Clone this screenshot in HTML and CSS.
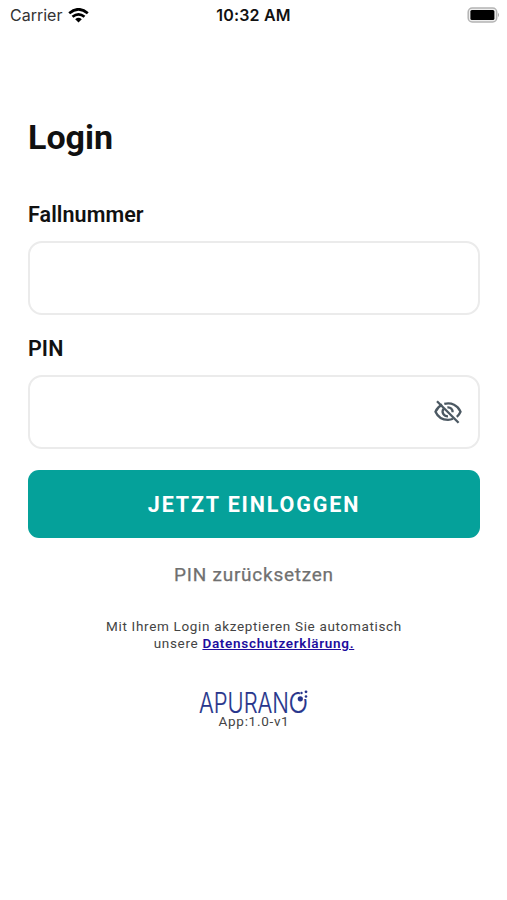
FILE: index.html
```html
<!DOCTYPE html>
<html lang="de">
<head>
<meta charset="utf-8">
<title>Login</title>
<link rel="stylesheet" href="styles.css">
</head>
<body>
<header class="status">
  <div class="carrier"><span>Carrier</span>
    <svg class="wifi" width="21" height="15" viewBox="0 0 21 15" fill="none" stroke="#000" stroke-width="2.7"><path d="M1.2 5.2Q10.5-2.6 19.8 5.2M4.5 8.8Q10.5 3.8 16.5 8.8"/><path d="M7.2 11.2Q10.5 8.4 13.8 11.2L10.5 14.6Z" fill="#000" stroke="none"/></svg>
  </div>
  <time class="clock">10:32 AM</time>
  <svg class="battery" width="34" height="16" viewBox="0 0 34 16"><rect x="1.2" y="1" width="28.5" height="14" rx="4" fill="#eee" stroke="#b4b4b4" stroke-width="1.5"/><rect x="3.4" y="3" width="24" height="10" rx="1.5" fill="#000"/><path d="M31 5.8Q33 8 31 10.2Z" fill="#aaa"/></svg>
</header>
<main class="login">
  <h1 class="title">Login</h1>
  <label class="label" for="case">Fallnummer</label>
  <div class="field"><input class="input" id="case" type="text"></div>
  <label class="label" for="pin">PIN</label>
  <div class="field"><input class="input" id="pin" type="password">
    <svg class="eye" width="28" height="24" viewBox="0 0 28 24" fill="none" stroke="#4c5963" stroke-width="2.3"><path d="M8.2 4.6C4.8 6.2 2.6 9 1.5 11.7C3.6 16.5 8.3 19.8 14 19.8C15.8 19.8 17.5 19.5 19 18.8M10.3 3.9C17.2 2 24 5.3 26.5 11.7C25.7 13.6 24.5 15.4 22.8 16.8"/><path d="M9.5 8.8C7.2 12.3 9.6 16.3 14 16.3M13.4 7.4C16.6 7.1 18.8 9.2 18.6 12.3"/><path d="M3 1.2L24.6 22.8"/></svg>
  </div>
  <button class="submit">JETZT EINLOGGEN</button>
  <a class="reset">PIN zurücksetzen</a>
  <p class="legal">Mit Ihrem Login akzeptieren Sie automatisch<br>unsere <a class="privacy" href="#">Datenschutzerklärung.</a></p>
  <svg class="logo" width="112" height="26" viewBox="0 0 112 26"><text class="wordmark" y="23.5"><tspan x="1" textLength="90" lengthAdjust="spacingAndGlyphs">APURAN</tspan><tspan x="90.5" textLength="19.5" lengthAdjust="spacingAndGlyphs">O</tspan></text><path d="M101 0H112V10H103Z" fill="#fff"/><circle cx="102.3" cy="9.8" r="2.6"/><circle cx="108" cy="7.5" r="1.3"/><circle cx="103.5" cy="4" r="1.2"/><circle cx="108" cy="2.8" r="1.4"/></svg>
  <p class="version">App:1.0-v1</p>
</main>
</body>
</html>
```
FILE: styles.css
```css
* { box-sizing: border-box; }
body { margin: 0; background: #fff; color: #111; font-family: Roboto, sans-serif; }
p, h1 { margin: 0; }
.status { display: grid; grid-template-columns: 1fr auto 1fr; align-items: center; height: 30px; padding: 0 6px 0 10px; font: 16px/30px Inter, sans-serif; }
.carrier { display: flex; align-items: center; gap: 6px; color: #333; }
.clock { font-weight: 600; letter-spacing: .2px; margin-right: 4px; }
.battery { justify-self: end; }
.login { display: flex; flex-direction: column; padding: 87px 27px 0 28px; }
.title { font-size: 34px; line-height: 40px; font-weight: 700; margin-bottom: 45px; }
.label { font-size: 21.5px; line-height: 26px; font-weight: 600; letter-spacing: .08px; margin-bottom: 13px; }
.field { display: flex; align-items: center; height: 74px; padding: 0 16px; border: 2px solid #ebebeb; border-radius: 14px; margin-bottom: 21px; }
.input { flex: 1; min-width: 0; height: 60px; border: 0; outline: 0; background: transparent; font: inherit; }
.submit { height: 68px; border: 0; border-radius: 11px; background: #05a19a; color: #fff; font: 700 21.5px/68px Roboto, sans-serif; letter-spacing: 1.85px; padding: 1px 0 0; }
.reset { align-self: center; margin-top: 24px; font-size: 19px; line-height: 26px; letter-spacing: .75px; color: #707070; -webkit-text-stroke: .25px #707070; }
.legal { margin-top: 30px; text-align: center; font-size: 13.5px; line-height: 16.5px; letter-spacing: .67px; color: #444; }
.privacy { color: #210d9e; font-weight: 600; letter-spacing: .7px; }
.logo { align-self: center; margin-top: 38px; fill: #26358c; }
.wordmark { font: 300 28.5px Inter, sans-serif; stroke: #26358c; stroke-width: .2px; }
.version { text-align: center; font-size: 13.5px; line-height: 16px; margin-top: -2px; letter-spacing: .7px; color: #444; }
```
